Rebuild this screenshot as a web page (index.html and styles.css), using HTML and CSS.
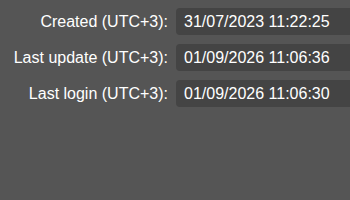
FILE: index.html
```html
<!DOCTYPE html>
<html>
<head>
<meta charset="utf-8">
<link rel="stylesheet" href="styles.css">
</head>
<body>
<div class="info">
  <div class="label">Created (UTC+3):</div>
  <div class="value">31/07/2023 11:22:25</div>
  <div class="label">Last update (UTC+3):</div>
  <div class="value">01/09/2026 11:06:36</div>
  <div class="label">Last login (UTC+3):</div>
  <div class="value">01/09/2026 11:06:30</div>
</div>
</body>
</html>
```
FILE: styles.css
```css
html, body {
  margin: 0;
  padding: 0;
  background: #555555;
}
body {
  font-family: "Liberation Sans", Arial, sans-serif;
  font-size: 16px;
  color: #ffffff;
}
.info {
  display: grid;
  grid-template-columns: 168px 1fr;
  column-gap: 8px;
  row-gap: 9px;
  grid-auto-rows: 27px;
  padding-top: 8px;
}
.label {
  display: flex;
  align-items: center;
  justify-content: flex-end;
  white-space: nowrap;
}
.value {
  background: #444444;
  border-radius: 4px 0 0 4px;
  padding: 0 8px;
  display: flex;
  align-items: center;
  white-space: nowrap;
}
```
